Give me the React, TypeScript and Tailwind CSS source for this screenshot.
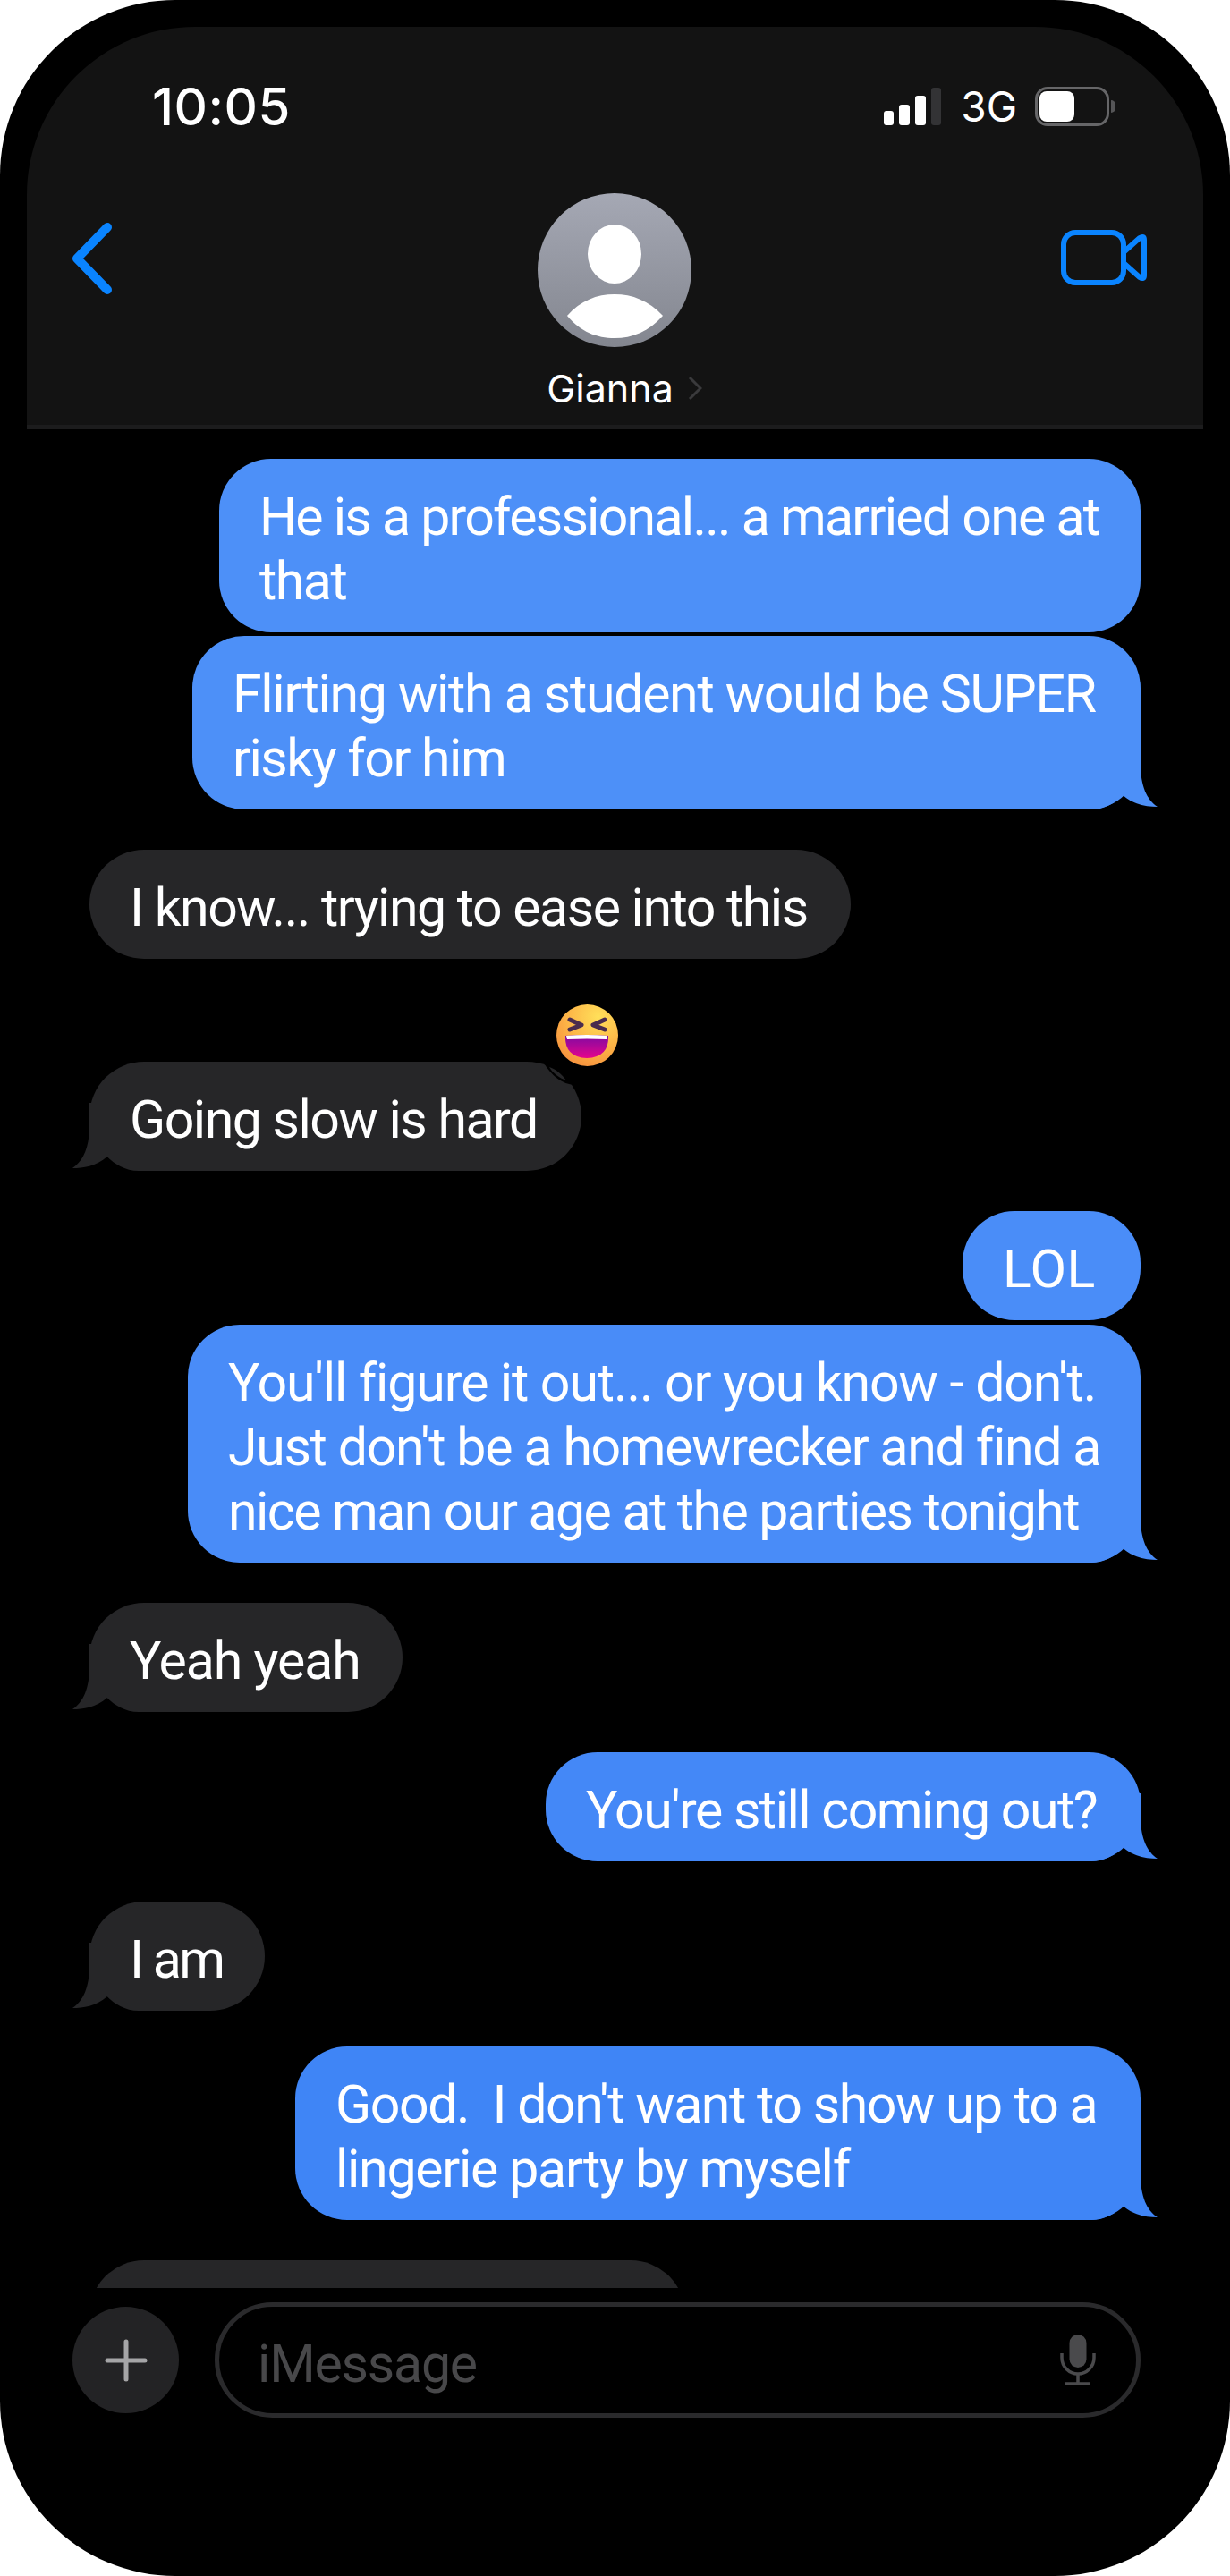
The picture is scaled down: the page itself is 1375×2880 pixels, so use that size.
import { ReactNode } from "react"

const font = "font-['Inter','Liberation_Sans',sans-serif]"

// speech bubble tail, drawn for the right side; received bubbles mirror it
const Tail = ({ fill, left }: { fill: string, left?: boolean }) => (
  <svg
    viewBox="0 0 100 76"
    className={`absolute bottom-0 h-[76px] w-[100px] ${fill} ${left ? "left-[-25px] -scale-x-100" : "right-[-25px]"}`}
  >
    <path fill="currentColor" d="M75 0 L75 25 C75 50 82 65 94 73 C82 73 68 71 55 60 C48 68 35 76 20 76 L0 76 L0 0 Z" />
  </svg>
)

const Sent = ({ children, width, mt, bg, fill, tail = true }: { children: ReactNode, width: string, mt: string, bg: string, fill: string, tail?: boolean }) => (
  <div className={`relative self-end rounded-[58px] pb-[21px] pl-[45px] pr-[30px] pt-[29px] whitespace-nowrap ${width} ${mt} ${bg}`}>
    {tail && <Tail fill={fill} />}
    <div className="relative">{children}</div>
  </div>
)

const Received = ({ children, width, mt, tail = true }: { children: ReactNode, width: string, mt: string, tail?: boolean }) => (
  <div className={`relative self-start rounded-[61px] bg-[#262628] pb-[21px] pl-[45px] pr-[30px] pt-[29px] whitespace-nowrap ${width} ${mt}`}>
    {tail && <Tail fill="text-[#262628]" left />}
    <div className="relative">{children}</div>
  </div>
)

const StatusBar = () => (
  <div className="mt-[60px] flex h-[56px] items-center justify-between pl-[140px] pr-[98px]">
    <span className="text-[58px] leading-[56px] font-medium tracking-[0.5px] text-white">10:05</span>
    <div className="flex items-center">
      <div className="flex h-[42px] items-end gap-[6px]">
        <div className="h-[16px] w-[11px] rounded-[3px] bg-white" />
        <div className="h-[23px] w-[12px] rounded-[3px] bg-white" />
        <div className="h-[33px] w-[12px] rounded-[3px] bg-white" />
        <div className="h-[42px] w-[11px] rounded-[3px] bg-[#333335]" />
      </div>
      <span className="ml-[22px] text-[46px] leading-[46px] text-white">3G</span>
      <div className="ml-[20px] flex h-[44px] w-[83px] items-center rounded-[14px] border-[3px] border-[#666668] p-[2px]">
        <div className="h-[34px] w-[39px] rounded-[8px] bg-white" />
      </div>
      <div className="ml-[2px] h-[14px] w-[5px] rounded-r-full bg-[#555557]" />
    </div>
  </div>
)

const Avatar = () => (
  <svg viewBox="0 0 172 172" className="h-[172px] w-[172px]">
    <defs>
      <linearGradient id="avatarBg" x1="0" y1="0" x2="0" y2="1">
        <stop offset="0" stopColor="#a5a8b4" />
        <stop offset="1" stopColor="#83868f" />
      </linearGradient>
    </defs>
    <circle cx="86" cy="86" r="86" fill="url(#avatarBg)" />
    <ellipse cx="86" cy="68" rx="30" ry="33" fill="#fff" />
    <path fill="#fff" d="M33 137 C48 120 66 113 86 113 C106 113 124 120 140 137 C124 155 106 162 86 162 C66 162 48 155 33 137 Z" />
  </svg>
)

const NavBar = () => (
  <div className="mt-[69px] grid grid-cols-[1fr_auto_1fr]">
    <div className="pl-[50px] pt-[33px]">
      <svg viewBox="0 0 46 80" className="h-[80px] w-[46px]" fill="none" stroke="#0a84ff" strokeWidth="10" strokeLinecap="round" strokeLinejoin="round">
        <path d="M40 5 L6 40 L40 75" />
      </svg>
    </div>
    <div className="flex flex-col items-center">
      <Avatar />
      <div className="mt-[21px] flex items-center pl-[21px]">
        <span className="text-[43px] leading-[50px] text-white">Gianna</span>
        <svg viewBox="0 0 16 28" className="ml-[16px] h-[28px] w-[16px]" fill="none" stroke="#3a3a3c" strokeWidth="3">
          <path d="M2 2 L14 14 L2 26" />
        </svg>
      </div>
    </div>
    <div className="flex justify-end pr-[63px] pt-[41px]">
      <svg viewBox="0 0 96 62" className="h-[62px] w-[96px]" fill="none" stroke="#0a84ff" strokeWidth="6" strokeLinejoin="round">
        <rect x="3" y="3" width="67" height="56" rx="13" />
        <path d="M70 25 L88 9 Q93 6 93 11 L93 51 Q93 56 88 53 L70 37 Z" />
      </svg>
    </div>
  </div>
)

const Reaction = () => (
  <>
    <svg viewBox="0 0 60 50" className="absolute left-[499px] top-[-7px] h-[50px] w-[60px]">
      <path fill="#000" d="M5 0 L60 0 L60 36 L43 33 C30 32 18 24 8 7 Z" />
      <path fill="#262628" d="M15 13 C22 15 29 21 34 28 C26 25 19 20 15 13 Z" />
    </svg>
    <svg viewBox="0 0 69 69" className="absolute left-[522px] top-[-64px] h-[69px] w-[69px]">
      <defs>
        <radialGradient id="faceFill" cx="0.68" cy="0.2" r="0.95">
          <stop offset="0" stopColor="#ffe05a" />
          <stop offset="0.55" stopColor="#fdb346" />
          <stop offset="1" stopColor="#f58a3c" />
        </radialGradient>
        <linearGradient id="mouthFill" x1="0" y1="0" x2="0" y2="1">
          <stop offset="0" stopColor="#7d0aa3" />
          <stop offset="1" stopColor="#e5058c" />
        </linearGradient>
      </defs>
      <circle cx="34.5" cy="34.5" r="34.5" fill="url(#faceFill)" />
      <path d="M15 17 L28 23 L15 28 M54 17 L41 23 L54 28" fill="none" stroke="#4a2c4e" strokeWidth="5" strokeLinecap="round" strokeLinejoin="round" />
      <path fill="url(#mouthFill)" d="M10 35 Q34 33 58 35 Q59 59 34 60 Q9 59 10 35 Z" />
      <path fill="#fff" d="M11 35 Q34 33 57 35 L56 39 Q34 38 12 39 Z" />
    </svg>
  </>
)

const InputBar = () => (
  <div className="mt-[16px] flex items-center pl-[81px]">
    <div className="flex h-[119px] w-[119px] items-center justify-center rounded-full bg-[#232325]">
      <svg viewBox="0 0 48 48" className="h-[48px] w-[48px]" stroke="#a5a5a7" strokeWidth="5" strokeLinecap="round">
        <path d="M24 3 V45 M3 24 H45" />
      </svg>
    </div>
    <div className="ml-[40px] flex h-[129px] w-[1035px] items-center justify-between rounded-full border-[5px] border-[#2a2a2c] pl-[43px] pr-[45px]">
      <span className="pt-[8px] font-['Roboto',sans-serif] text-[59px] leading-[72px] tracking-[-1.2px] text-[#48484a]">iMessage</span>
      <svg viewBox="0 0 40 57" className="h-[57px] w-[40px]" fill="none" stroke="#4a4a4c" strokeWidth="3.5">
        <rect x="10.5" y="0" width="19" height="37" rx="9.5" fill="#4a4a4c" stroke="none" />
        <path d="M2 21 V26 a18 18 0 0 0 36 0 V21" />
        <path d="M20 44 V55 M6 55 H34" />
      </svg>
    </div>
  </div>
)

export default function App() {
  return (
    <div className={`h-[2880px] w-[1375px] bg-white ${font}`}>
      <div className="flex h-full flex-col overflow-hidden rounded-[196px] bg-black">
        <div className="mx-[30px] mt-[30px] h-[450px] shrink-0 rounded-t-[188px] border-b-[5px] border-[#1c1c1d] bg-[#131313]">
          <div className="h-px" />
          <StatusBar />
          <NavBar />
        </div>

        <div className="flex flex-col px-[100px] pt-[33px] font-['Roboto',sans-serif] text-[59px] leading-[72px] tracking-[-1.5px] text-white">
          <Sent width="w-[1030px]" mt="mt-0" bg="bg-[#4d90f8]" fill="text-[#4d90f8]" tail={false}>
            <div className="tracking-[-1.75px]">He is a professional... a married one at</div>
            <div>that</div>
          </Sent>
          <Sent width="w-[1060px]" mt="mt-[4px]" bg="bg-[#4d90f8]" fill="text-[#4d90f8]">
            <div className="tracking-[-1.3px]">Flirting with a student would be SUPER</div>
            <div>risky for him</div>
          </Sent>
          <Received width="w-[851px]" mt="mt-[45px]" tail={false}>
            I know... trying to ease into this
          </Received>
          <div className="relative mt-[115px] self-start">
            <Received width="w-[550px]" mt="mt-0">Going slow is hard</Received>
            <Reaction />
          </div>
          <Sent width="w-[199px]" mt="mt-[45px]" bg="bg-[#4a8df8]" fill="text-[#4a8df8]" tail={false}>
            <div className="tracking-[0.5px]">LOL</div>
          </Sent>
          <Sent width="w-[1065px]" mt="mt-[5px]" bg="bg-[#498cf8]" fill="text-[#498cf8]">
            <div className="tracking-[-1.1px]">You'll figure it out... or you know - don't.</div>
            <div className="tracking-[-1.35px]">Just don't be a homewrecker and find a</div>
            <div className="tracking-[-1.55px]">nice man our age at the parties tonight</div>
          </Sent>
          <Received width="w-[350px]" mt="mt-[45px]">
            <div className="tracking-[-1.1px]">Yeah yeah</div>
          </Received>
          <Sent width="w-[665px]" mt="mt-[45px]" bg="bg-[#4488f7]" fill="text-[#4488f7]">
            You're still coming out?
          </Sent>
          <Received width="w-[196px]" mt="mt-[45px]">
            <div className="tracking-[-2.5px]">I am</div>
          </Received>
          <Sent width="w-[945px]" mt="mt-[40px]" bg="bg-[#3f85f6]" fill="text-[#3f85f6]">
            <div className="tracking-[-1.45px]">Good.&nbsp; I don't want to show up to a</div>
            <div className="tracking-[-1.3px]">lingerie party by myself</div>
          </Sent>
          <div className="mt-[45px] h-[31px] w-[666px] shrink-0 overflow-hidden">
            <div className="h-[122px] rounded-[61px] bg-[#262628]" />
          </div>
        </div>

        <InputBar />
      </div>
    </div>
  )
}
